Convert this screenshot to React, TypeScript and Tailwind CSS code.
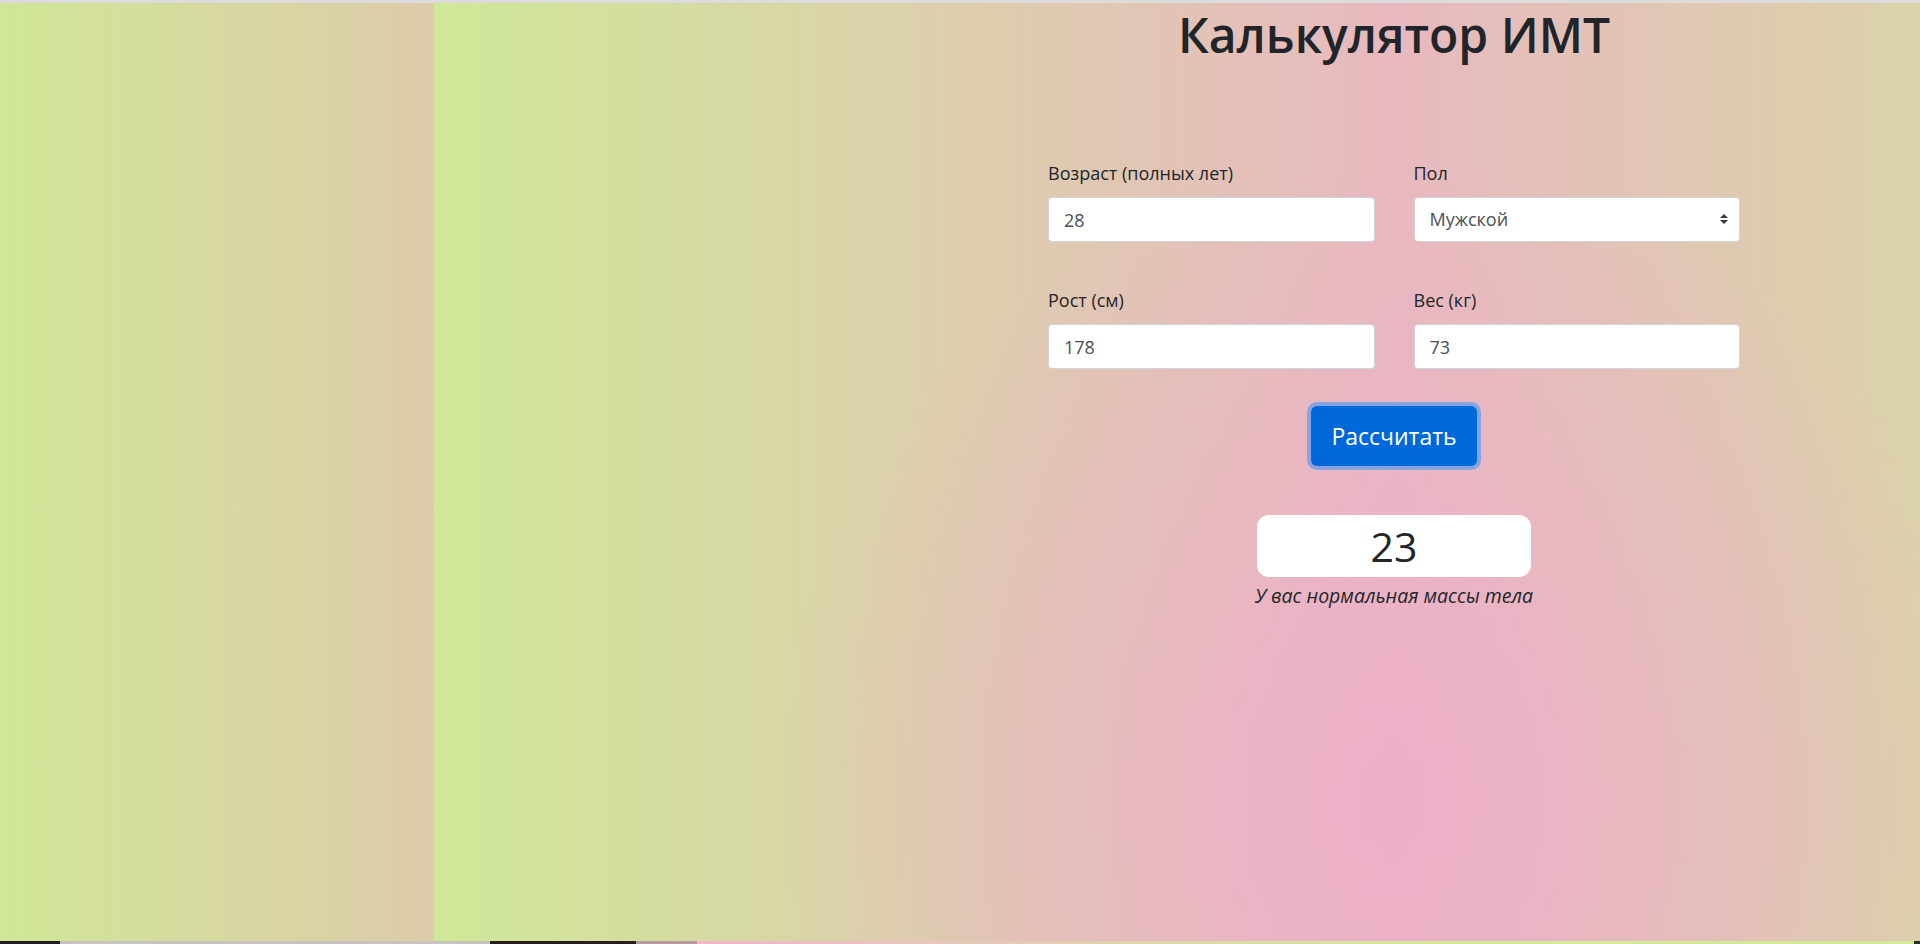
import { useState } from "react";

// Калькулятор ИМТ: sidebar + wide main panel (main is wider than the screen)
export default function App() {
  const [age, setAge] = useState("28");
  const [sex, setSex] = useState("m");
  const [height, setHeight] = useState("178");
  const [weight, setWeight] = useState("73");

  const bmi = Math.round(Number(weight) / Math.pow(Number(height) / 100, 2));

  const inputCls =
    "h-[45px] w-full rounded-[4px] border border-[#ced4da] bg-white px-[15px] text-[18px] text-[#495057] outline-none";

  return (
    <div className="flex h-screen w-screen flex-col overflow-hidden bg-[#dcdcdc] font-['Open_Sans',sans-serif] text-[#212529]">
      <div className="mt-[3px] flex min-h-0 flex-1">
        <aside className="w-[434px] shrink-0 bg-[linear-gradient(90deg,#d0e797,#ddcbaa)]" />

        <main className="w-[1920px] shrink-0 bg-[radial-gradient(ellipse_620px_640px_at_50%_85%,rgba(238,172,203,0.8),rgba(238,172,203,0)),linear-gradient(90deg,#cfe897_0%,#e8b9bf_50%,#cfe897_100%)]">
          <h1 className="-mt-[1px] text-center text-[48px] font-semibold leading-[66px]">Калькулятор ИМТ</h1>

          <form
            className="mx-auto mt-[93px] grid w-[692px] grid-cols-2 gap-x-[39px] gap-y-[46px]"
            onSubmit={(e) => e.preventDefault()}
          >
            <div>
              <label className="mb-[12px] block text-[18px] leading-[24px]">Возраст (полных лет)</label>
              <input className={inputCls} value={age} onChange={(e) => setAge(e.target.value)} />
            </div>
            <div>
              <label className="mb-[12px] block text-[18px] leading-[24px]">Пол</label>
              <div className="relative">
                <select
                  className={inputCls + " appearance-none"}
                  value={sex}
                  onChange={(e) => setSex(e.target.value)}
                >
                  <option value="m">Мужской</option>
                  <option value="f">Женский</option>
                </select>
                <svg
                  className="pointer-events-none absolute right-[12px] top-[17px] h-[10px] w-[8px]"
                  viewBox="0 0 4 5"
                >
                  <path fill="#343a40" d="M2 0L0 2h4zm0 5L0 3h4z" />
                </svg>
              </div>
            </div>
            <div>
              <label className="mb-[12px] block text-[18px] leading-[24px]">Рост (см)</label>
              <input className={inputCls} value={height} onChange={(e) => setHeight(e.target.value)} />
            </div>
            <div>
              <label className="mb-[12px] block text-[18px] leading-[24px]">Вес (кг)</label>
              <input className={inputCls} value={weight} onChange={(e) => setWeight(e.target.value)} />
            </div>
          </form>

          <div className="mt-[37px] flex justify-center">
            <button
              type="button"
              className="h-[60px] w-[166px] rounded-[6px] bg-[#0069d9] text-[23px] text-white shadow-[0_0_0_4px_rgba(38,143,255,0.5)]"
            >
              Рассчитать
            </button>
          </div>

          <div className="mx-auto mt-[49px] flex h-[62px] w-[274px] items-center justify-center rounded-[12px] bg-white text-[41px] leading-none">
            {bmi}
          </div>
          <p className="mt-[6px] text-center text-[19.5px] italic leading-[26px]">У вас нормальная массы тела</p>
        </main>
      </div>

      {/* bottom edge of the next block peeking in */}
      <div className="flex h-[3px] shrink-0">
        <div className="w-[60px] bg-[#1f1f1f]" />
        <div className="w-[430px] bg-[#c6c3c0]" />
        <div className="w-[146px] bg-[#2a1d1f]" />
        <div className="w-[61px] bg-[#b89aa2]" />
        <div className="flex-1 bg-[linear-gradient(90deg,#f0b6cc,#d4e89a_60%,#d4e89a)]" />
        <div className="w-[6px] bg-[#2a2a2a]" />
      </div>
    </div>
  );
}
